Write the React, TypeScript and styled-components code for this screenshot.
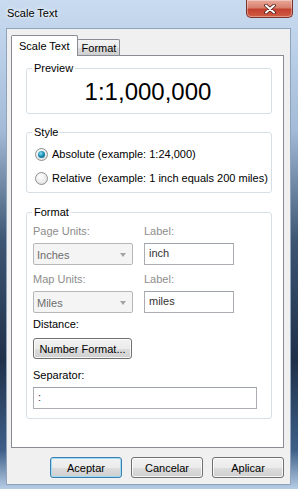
import React from 'react';
import styled, { createGlobalStyle } from 'styled-components';

const GlobalStyle = createGlobalStyle`
  html, body {
    margin: 0;
    padding: 0;
  }
  body {
    width: 298px;
    height: 489px;
    overflow: hidden;
    font-family: 'Liberation Sans', Arial, sans-serif;
    font-size: 11px;
    color: #000;
  }
`;

const Window = styled.div`
  width: 298px;
  height: 489px;
  box-sizing: border-box;
  display: flex;
  flex-direction: column;
  padding-bottom: 4px;
  background: linear-gradient(
    180deg,
    #c9dbef 0px,
    #bed2ea 40px,
    #a3bbd7 130px,
    #3d5673 240px,
    #1f3049 360px,
    #3e5f88 450px,
    #b7cde6 489px
  );
`;

const TitleBar = styled.div`
  height: 28px;
  flex: none;
  display: flex;
  justify-content: space-between;
  align-items: flex-start;
  padding: 0 5px 0 7px;
`;

const Title = styled.span`
  line-height: 26px;
  font-size: 11px;
  text-shadow: 0 0 6px #fff, 0 0 3px #fff;
`;

const CloseButton = styled.div`
  width: 47px;
  height: 18px;
  box-sizing: border-box;
  display: flex;
  align-items: center;
  justify-content: center;
  border: 1px solid #7a3328;
  border-top: none;
  border-radius: 0 0 5px 5px;
  background: linear-gradient(180deg, #e8a89a 0%, #d8806e 45%, #c2412f 55%, #d25d43 100%);
  box-shadow: inset 0 0 0 1px rgba(255, 255, 255, 0.35);
`;

const Client = styled.div`
  flex: 1;
  margin: 0 7px 0 6px;
  border: 1px solid #8fa3bd;
  background: #f0f0f0;
  padding: 6px 6px 0 4px;
  display: flex;
  flex-direction: column;
`;

const TabStrip = styled.div`
  display: flex;
  align-items: flex-end;
  height: 20px;
`;

const Tab = styled.div<{ active?: boolean }>`
  position: relative;
  box-sizing: border-box;
  display: flex;
  align-items: center;
  border: 1px solid #898c95;
  border-bottom: none;
  border-radius: 2px 2px 0 0;
  height: ${p => (p.active ? '21px' : '16px')};
  margin-bottom: ${p => (p.active ? '-1px' : '0')};
  margin-left: ${p => (p.active ? '0' : '-1px')};
  padding: ${p => (p.active ? '0 7px' : '0 3px 0 4px')};
  background: ${p => (p.active ? '#fff' : 'linear-gradient(180deg, #f3f3f3 0%, #ebebeb 50%, #dddddd 51%, #cfcfcf 100%)')};
  z-index: ${p => (p.active ? 2 : 1)};
`;

const Panel = styled.div`
  height: 393px;
  box-sizing: border-box;
  background: #fff;
  border: 1px solid #898c95;
  padding: 5px 11px 0 14px;
  display: flex;
  flex-direction: column;
`;

const Group = styled.fieldset<{ gap?: number; bottom?: number }>`
  margin: ${p => p.gap ?? 0}px 0 0 0;
  padding: 0 8px ${p => p.bottom ?? 7}px 6px;
  border: 1px solid #d5dfe5;
  border-radius: 3px;
  min-width: 0;
`;

const Legend = styled.legend`
  padding: 0 2px;
  margin-left: -1px;
  line-height: 15px;
`;

const BigText = styled.div`
  margin-top: 2px;
  font-size: 24px;
  line-height: 28px;
  text-align: center;
`;

const RadioList = styled.div`
  padding-top: 2px;
  margin-bottom: -5px;
`;

const RadioRow = styled.div`
  display: flex;
  align-items: center;
  height: 24px;
  gap: 4px;
  padding-left: 2px;
  white-space: pre;
`;

const RadioCircle = styled.span<{ checked?: boolean }>`
  flex: none;
  width: 13px;
  height: 13px;
  box-sizing: border-box;
  border-radius: 50%;
  border: 1px solid #8e8f8f;
  background: radial-gradient(circle at 40% 35%, #ffffff 0%, #e9e9e9 60%, #cfcfcf 100%);
  display: flex;
  align-items: center;
  justify-content: center;

  &::after {
    content: '';
    display: ${p => (p.checked ? 'block' : 'none')};
    width: 7px;
    height: 7px;
    border-radius: 50%;
    background: radial-gradient(circle at 40% 35%, #8ee3f8 0%, #1d8fb6 45%, #0d5a78 100%);
  }
`;

const Label = styled.div<{ disabled?: boolean }>`
  line-height: 15px;
  color: ${p => (p.disabled ? '#8d8d8d' : '#000')};
`;

const UnitsRow = styled.div<{ gap?: number }>`
  display: flex;
  gap: 11px;
  margin-top: ${p => p.gap ?? 0}px;
`;

const Field = styled.div<{ width: number }>`
  display: flex;
  flex-direction: column;
  gap: 4px;
  width: ${p => p.width}px;
`;

const Combo = styled.div`
  height: 22px;
  box-sizing: border-box;
  border: 1px solid #b4b8bb;
  border-radius: 2px;
  background: #f4f4f4;
  color: #6d6d6d;
  display: flex;
  align-items: center;
  justify-content: space-between;
  padding: 1px 6px 0 3px;
`;

const Arrow = styled.span`
  width: 0;
  height: 0;
  border-left: 3.5px solid transparent;
  border-right: 3.5px solid transparent;
  border-top: 4px solid #a3a3a3;
`;

const TextBox = styled.div<{ width?: number }>`
  height: 22px;
  box-sizing: border-box;
  width: ${p => (p.width ? `${p.width}px` : 'auto')};
  border: 1px solid #abadb3;
  border-top-color: #9ea2aa;
  background: #fff;
  color: #333;
  padding: 0 4px;
  line-height: 18px;
`;

const Block = styled.div<{ gap: number }>`
  margin-top: ${p => p.gap}px;
`;

const Button = styled.div<{ width: number; isDefault?: boolean }>`
  width: ${p => p.width}px;
  height: 21px;
  box-sizing: border-box;
  display: flex;
  align-items: center;
  justify-content: center;
  border: 1px solid ${p => (p.isDefault ? '#3c7fb1' : '#707070')};
  border-radius: 3px;
  background: linear-gradient(180deg, #f2f2f2 0%, #ebebeb 50%, #dddddd 51%, #cfcfcf 100%);
  box-shadow: inset 0 0 0 1px ${p => (p.isDefault ? '#9fdcf3' : 'rgba(255, 255, 255, 0.8)')};
  color: #000;
`;

const ButtonRow = styled.div`
  display: flex;
  justify-content: flex-end;
  gap: 9px;
  margin-top: 9px;
`;

function CloseGlyph() {
  return (
    <svg width='12' height='10' viewBox='0 0 12 10'>
      <path d='M2 1.5 L10 8.5 M10 1.5 L2 8.5' stroke='#4a1a14' strokeWidth='3.6' strokeLinecap='round' />
      <path d='M2 1.5 L10 8.5 M10 1.5 L2 8.5' stroke='#fff' strokeWidth='2' strokeLinecap='round' />
    </svg>
  );
}

export default function App() {
  return (
    <>
      <GlobalStyle />
      <Window>
        <TitleBar>
          <Title>Scale Text</Title>
          <CloseButton>
            <CloseGlyph />
          </CloseButton>
        </TitleBar>
        <Client>
          <TabStrip>
            <Tab active>Scale Text</Tab>
            <Tab>Format</Tab>
          </TabStrip>
          <Panel>
            <Group>
              <Legend>Preview</Legend>
              <BigText>1:1,000,000</BigText>
            </Group>

            <Group gap={11}>
              <Legend>Style</Legend>
              <RadioList>
                <RadioRow>
                  <RadioCircle checked />
                  Absolute (example: 1:24,000)
                </RadioRow>
                <RadioRow>
                  <RadioCircle />
                  Relative  (example: 1 inch equals 200 miles)
                </RadioRow>
              </RadioList>
            </Group>

            <Group gap={12} bottom={9}>
              <Legend>Format</Legend>
              <UnitsRow gap={4}>
                <Field width={100}>
                  <Label disabled>Page Units:</Label>
                  <Combo>
                    Inches
                    <Arrow />
                  </Combo>
                </Field>
                <Field width={90}>
                  <Label disabled>Label:</Label>
                  <TextBox>inch</TextBox>
                </Field>
              </UnitsRow>
              <UnitsRow gap={7}>
                <Field width={100}>
                  <Label disabled>Map Units:</Label>
                  <Combo>
                    Miles
                    <Arrow />
                  </Combo>
                </Field>
                <Field width={90}>
                  <Label disabled>Label:</Label>
                  <TextBox>miles</TextBox>
                </Field>
              </UnitsRow>
              <Block gap={4}>
                <Label>Distance:</Label>
              </Block>
              <Block gap={6}>
                <Button width={99}>Number Format...</Button>
              </Block>
              <Block gap={9}>
                <Label>Separator:</Label>
              </Block>
              <Block gap={4}>
                <TextBox width={224}>:</TextBox>
              </Block>
            </Group>
          </Panel>
          <ButtonRow>
            <Button width={72} isDefault>
              Aceptar
            </Button>
            <Button width={72}>Cancelar</Button>
            <Button width={72}>Aplicar</Button>
          </ButtonRow>
        </Client>
      </Window>
    </>
  );
}
